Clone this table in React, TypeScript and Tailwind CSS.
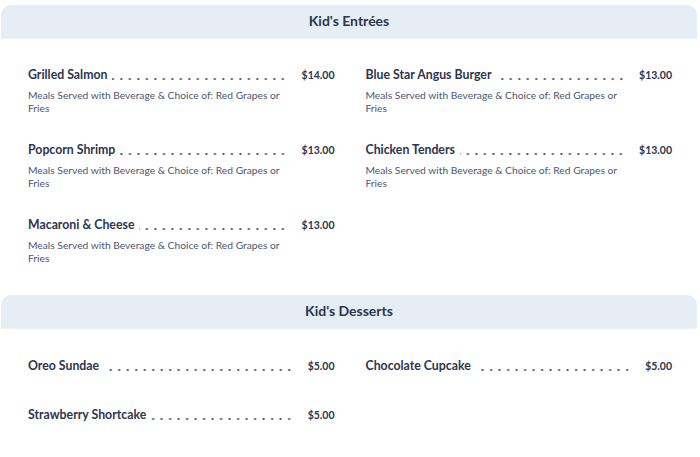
import React from "react";

type Item = { name: string; price: string; desc?: string };

const DESC = "Meals Served with Beverage & Choice of: Red Grapes or Fries";

const entrees: Item[] = [
  { name: "Grilled Salmon", price: "$14.00", desc: DESC },
  { name: "Blue Star Angus Burger", price: "$13.00", desc: DESC },
  { name: "Popcorn Shrimp", price: "$13.00", desc: DESC },
  { name: "Chicken Tenders", price: "$13.00", desc: DESC },
  { name: "Macaroni & Cheese", price: "$13.00", desc: DESC },
];

const desserts: Item[] = [
  { name: "Oreo Sundae", price: "$5.00" },
  { name: "Chocolate Cupcake", price: "$5.00" },
  { name: "Strawberry Shortcake", price: "$5.00" },
];

function MenuItem({ item }: { item: Item }) {
  return (
    <div className="flex flex-col gap-[6px]">
      <div className="flex items-baseline h-4 leading-4">
        <span className="text-[12.3px] font-bold text-[#2b3650] whitespace-nowrap">{item.name}</span>
        <span className="flex-1 self-stretch ml-[5px] bg-[radial-gradient(circle,#4b5670_0.85px,transparent_1.3px)] bg-[length:8.5px_4px] bg-repeat-x bg-[position:right_10px]" />
        <span className="pl-[14px] text-[10.5px] font-bold text-[#2b3650] whitespace-nowrap">{item.price}</span>
      </div>
      <div className="text-[10.25px] leading-[13px] text-[#4b5670] pr-[36px]">{item.desc}</div>
    </div>
  );
}

function Section({ title, items, pt }: { title: string; items: Item[]; pt: string }) {
  return (
    <div>
      <div className="ml-[1px] mr-[3px] h-[34px] rounded-t-[10px] bg-[#e6edf5] flex items-center justify-center border-b border-[#eef2f8]">
        <h2 className="text-[14px] font-bold text-[#2b3650] -mt-[2px]">{title}</h2>
      </div>
      <div className={`grid grid-cols-2 gap-x-[31px] gap-y-[27px] px-[28px] ${pt}`}>
        {items.map((it) => (
          <MenuItem key={it.name} item={it} />
        ))}
      </div>
    </div>
  );
}

export default function App() {
  return (
    <div className="w-[700px] h-[457px] bg-white pt-[5px]" style={{ fontFamily: "Lato, 'Noto Sans', sans-serif" }}>
      <Section title="Kid's Entrées" items={entrees} pt="pt-[28px]" />
      <div className="h-[30px]" />
      <Section title="Kid's Desserts" items={desserts} pt="pt-[29px]" />
    </div>
  );
}
